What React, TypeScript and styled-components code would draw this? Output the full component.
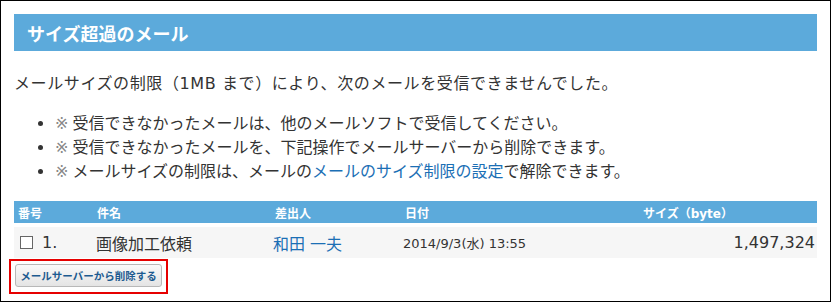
import React from 'react'
import styled, { createGlobalStyle } from 'styled-components'

const GlobalStyle = createGlobalStyle`
  html, body {
    margin: 0;
    padding: 0;
    background: #fff;
  }
  body {
    font-family: "DejaVu Sans", "Noto Sans CJK JP", sans-serif;
    color: #333;
  }
`

const Frame = styled.div`
  box-sizing: border-box;
  width: 831px;
  height: 302px;
  border: 1px solid #000;
  padding: 13px 13px 0 13px;
`

const Title = styled.h2`
  margin: 0;
  height: 37px;
  padding: 0 13px;
  display: flex;
  align-items: center;
  background: #5caadb;
  color: #fff;
  font-size: 18px;
  font-weight: 700;
`

const Lead = styled.p`
  margin: 21px 0 0;
  font-size: 16px;
  line-height: 24px;
  letter-spacing: 0.6px;
`

const Notes = styled.ul`
  margin: 16px 0 0;
  padding-left: 41px;
  font-size: 16px;
  line-height: 24px;
`

const Mark = styled.span`
  color: #888;
  margin-right: 4px;
`

const Link = styled.a`
  color: #1b6fb5;
  text-decoration: none;
`

const cols = '80px 178px 130px 236px 1fr'

const Table = styled.div`
  margin-top: 17px;
  display: grid;
  row-gap: 4px;
`

const HeadRow = styled.div`
  display: grid;
  grid-template-columns: ${cols};
  height: 22px;
  align-items: center;
  background: #5caadb;
  color: #fff;
  font-size: 12px;
  font-weight: 700;
`

const HeadCell = styled.div<{ $pad?: number }>`
  padding-left: ${(p) => p.$pad ?? 3}px;
`

const Row = styled.div`
  display: grid;
  grid-template-columns: ${cols};
  height: 31px;
  align-items: center;
  background: #f6f6f6;
`

const Cell = styled.div<{ $size?: number; $right?: boolean; $pad?: number }>`
  font-size: ${(p) => p.$size ?? 16}px;
  padding-left: ${(p) => p.$pad ?? 2}px;
  padding-right: ${(p) => (p.$right ? 2 : 0)}px;
  white-space: nowrap;
  display: flex;
  align-items: center;
  justify-content: ${(p) => (p.$right ? 'flex-end' : 'flex-start')};
`

const Check = styled.span`
  box-sizing: border-box;
  width: 13px;
  height: 13px;
  border: 1px solid #666;
  background: #fff;
  margin-right: 9px;
`

const Highlight = styled.div`
  box-sizing: border-box;
  width: 159px;
  height: 35px;
  margin: 1px 0 0 -5px;
  border: 2px solid #e60000;
  padding: 3px 4px;
`

const Button = styled.button`
  box-sizing: border-box;
  width: 147px;
  height: 23px;
  padding: 0;
  border: 1px solid #b8b8b8;
  border-radius: 3px;
  background: linear-gradient(#fafafa, #e4e4e4);
  color: #1d5b90;
  font-family: "DejaVu Sans", "Noto Sans CJK JP", sans-serif;
  font-size: 10.5px;
  font-weight: 700;
  cursor: pointer;
`

export default function App() {
  return (
    <>
      <GlobalStyle />
      <Frame>
        <Title>サイズ超過のメール</Title>
        <Lead>メールサイズの制限（1MB まで）により、次のメールを受信できませんでした。</Lead>
        <Notes>
          <li>
            <Mark>※</Mark>受信できなかったメールは、他のメールソフトで受信してください。
          </li>
          <li>
            <Mark>※</Mark>受信できなかったメールを、下記操作でメールサーバーから削除できます。
          </li>
          <li>
            <Mark>※</Mark>メールサイズの制限は、メールの<Link href="#">メールのサイズ制限の設定</Link>で解除できます。
          </li>
        </Notes>
        <Table>
          <HeadRow>
            <HeadCell $pad={4}>番号</HeadCell>
            <HeadCell>件名</HeadCell>
            <HeadCell>差出人</HeadCell>
            <HeadCell>日付</HeadCell>
            <HeadCell $pad={5}>サイズ（byte）</HeadCell>
          </HeadRow>
          <Row>
            <Cell $pad={6}>
              <Check />
              1.
            </Cell>
            <Cell>画像加工依頼</Cell>
            <Cell $pad={1}>
              <Link href="#">和田 一夫</Link>
            </Cell>
            <Cell $size={13} $pad={1}>2014/9/3(水) 13:55</Cell>
            <Cell $right>1,497,324</Cell>
          </Row>
        </Table>
        <Highlight>
          <Button type="button">メールサーバーから削除する</Button>
        </Highlight>
      </Frame>
    </>
  )
}
